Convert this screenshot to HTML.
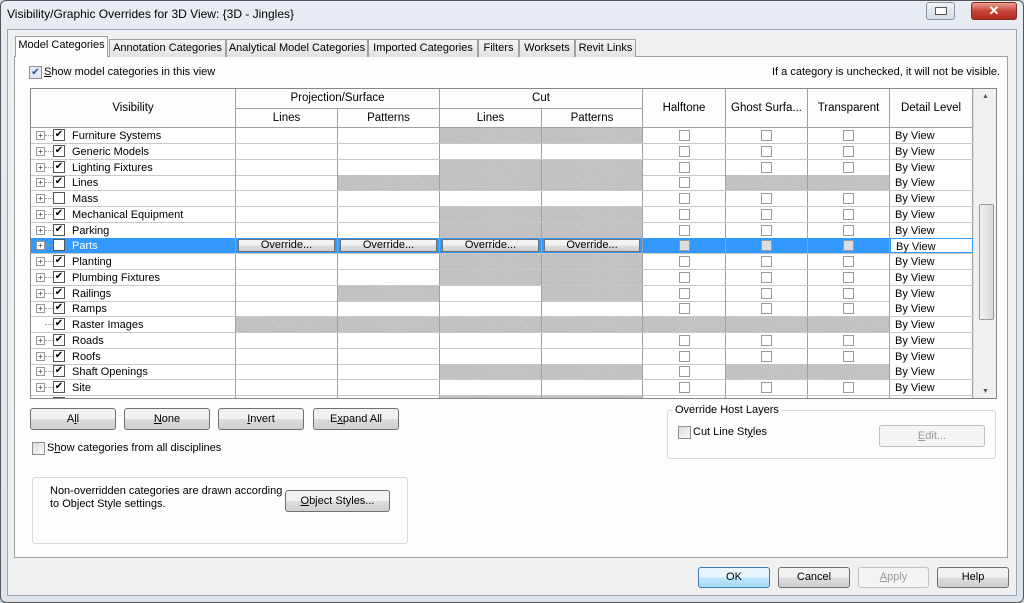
<!DOCTYPE html>
<html><head><meta charset="utf-8"><style>
*{box-sizing:border-box;margin:0;padding:0}
body{width:1024px;height:603px;overflow:hidden;background:#cfd8e2;font-family:"Liberation Sans",sans-serif;font-size:11px;color:#000;position:relative}
.a{position:absolute}
.frame{left:0;top:0;width:1024px;height:603px;border:1px solid #555;border-radius:6px;background:linear-gradient(#e6ecf2,#dce3ea)}
.body{left:7px;top:29px;width:1010px;height:567px;background:#f0f0f0;border:1px solid #9aa6b2}
.panel{left:14px;top:56px;width:994px;height:502px;background:#fdfdfd;border:1px solid #a0a0a0}
.tab{top:39px;height:18px;border:1px solid #a0a0a0;border-bottom:none;background:linear-gradient(#f4f4f4,#e2e2e2);font-size:11px;text-align:center;line-height:17px}
.tab.act{top:36px;height:21px;background:#fdfdfd;z-index:2}
.btn{border:1px solid #707070;border-radius:3px;background:linear-gradient(#f2f2f2 50%,#dddddd 50%,#cfcfcf);text-align:center;font-size:11px}
.cb{width:13px;height:13px;border:1px solid #8f8f8f;background:linear-gradient(135deg,#ddd,#fafafa)}
.grid{left:30px;top:88px;width:967px;height:311px;border:1px solid #828790;background:#fff;overflow:hidden}
.h{position:absolute;border-right:1px solid #a0a0a0;border-bottom:1px solid #a0a0a0;background:#fdfdfd;text-align:center;font-size:11.5px}
.hat{background-color:#cbcbcb;background-image:repeating-linear-gradient(45deg,#bababa 0 1px,transparent 1px 2px)}
.row{position:absolute;left:0;width:942px;height:16px;border-bottom:1px solid #c8c8c8}
.c{position:absolute;top:0;height:15px;border-right:1px solid #a0a0a0}
.sc{width:11px;height:11px;border:1px solid #9a9a9a;position:absolute;top:2px;background:#fff}
u{text-decoration:underline}
</style></head><body>
<div class="a frame"></div>
<div class="a" style="left:7px;top:7px;font-size:12px;color:#000">Visibility/Graphic Overrides for 3D View: {3D - Jingles}</div>
<div class="a" style="left:926px;top:2px;width:29px;height:18px;border:1px solid #8a96a4;border-radius:3px;background:linear-gradient(#f0f4f8,#d5dde6)"><div class="a" style="left:8px;top:4px;width:12px;height:8px;border:1px solid #555;background:#fff"></div></div>
<div class="a" style="left:971px;top:2px;width:46px;height:18px;border:1px solid #7a2a20;border-radius:3px;background:linear-gradient(#e8a090,#c8443a 50%,#b02a20);color:#fff;font-weight:bold;text-align:center;line-height:16px;font-size:13px">✕</div>
<div class="a body"></div>
<div class="a panel"></div>
<div class="a tab act" style="left:15px;width:93px">Model Categories</div>
<div class="a tab" style="left:109px;width:117px">Annotation Categories</div>
<div class="a tab" style="left:226px;width:142px">Analytical Model Categories</div>
<div class="a tab" style="left:368px;width:110px">Imported Categories</div>
<div class="a tab" style="left:478px;width:41px">Filters</div>
<div class="a tab" style="left:519px;width:56px">Worksets</div>
<div class="a tab" style="left:575px;width:61px">Revit Links</div>
<div class="a cb" style="left:29px;top:66px;background:#dfe8f6;font-size:10px;line-height:11px;text-align:center;color:#2a4a8a">✔</div>
<div class="a" style="left:44px;top:66px"><u>S</u>how model categories in this view</div>
<div class="a" style="left:772px;top:66px">If a category is unchecked, it will not be visible.</div>

<div class="a grid">
<div class="h" style="left:0;top:0;width:205px;height:39px;line-height:38px">Visibility</div>
<div class="h" style="left:205px;top:0;width:204px;height:20px;line-height:19px">Projection/Surface</div>
<div class="h" style="left:205px;top:20px;width:102px;height:19px;line-height:18px">Lines</div>
<div class="h" style="left:307px;top:20px;width:102px;height:19px;line-height:18px">Patterns</div>
<div class="h" style="left:409px;top:0;width:203px;height:20px;line-height:19px">Cut</div>
<div class="h" style="left:409px;top:20px;width:102px;height:19px;line-height:18px">Lines</div>
<div class="h" style="left:511px;top:20px;width:101px;height:19px;line-height:18px">Patterns</div>
<div class="h" style="left:612px;top:0;width:83px;height:39px;line-height:38px">Halftone</div>
<div class="h" style="left:695px;top:0;width:82px;height:39px;line-height:38px">Ghost Surfa...</div>
<div class="h" style="left:777px;top:0;width:82px;height:39px;line-height:38px">Transparent</div>
<div class="h" style="left:859px;top:0;width:83px;height:39px;line-height:38px">Detail Level</div>
<div id="rows"></div>
<div class="a" style="left:942px;top:0;width:24px;height:311px;background:#f0f0f0;border-left:1px solid #e0e0e0"></div>
<div class="a" style="left:951px;top:4px;font-size:7px;color:#555">▲</div>
<div class="a" style="left:951px;top:299px;font-size:7px;color:#555">▼</div>
<div class="a" style="left:948px;top:115px;width:15px;height:116px;border:1px solid #9a9a9a;border-radius:2px;background:linear-gradient(90deg,#f2f2f2,#d8d8d8)"></div>
</div>

<div class="a btn" style="left:30px;top:408px;width:86px;height:22px;line-height:20px">A<u>l</u>l</div>
<div class="a btn" style="left:124px;top:408px;width:86px;height:22px;line-height:20px"><u>N</u>one</div>
<div class="a btn" style="left:218px;top:408px;width:86px;height:22px;line-height:20px"><u>I</u>nvert</div>
<div class="a btn" style="left:313px;top:408px;width:86px;height:22px;line-height:20px">E<u>x</u>pand All</div>
<div class="a cb" style="left:32px;top:442px"></div>
<div class="a" style="left:47px;top:442px">S<u>h</u>ow categories from all disciplines</div>
<div class="a" style="left:32px;top:477px;width:376px;height:67px;border:1px solid #d8d8d8;border-radius:3px"></div>
<div class="a" style="left:50px;top:485px;line-height:13px">Non-overridden categories are drawn according<br>to Object Style settings.</div>
<div class="a btn" style="left:285px;top:490px;width:105px;height:22px;line-height:20px"><u>O</u>bject Styles...</div>

<div class="a" style="left:667px;top:410px;width:329px;height:49px;border:1px solid #d8d8d8;border-radius:3px"></div>
<div class="a" style="left:673px;top:404px;background:#fdfdfd;padding:0 2px">Override Host Layers</div>
<div class="a cb" style="left:678px;top:426px"></div>
<div class="a" style="left:693px;top:426px">Cut Line St<u>y</u>les</div>
<div class="a" style="left:879px;top:425px;width:106px;height:22px;border:1px solid #c0c0c0;border-radius:3px;background:#f4f4f4;color:#9a9a9a;text-align:center;line-height:20px"><u>E</u>dit...</div>

<div class="a btn" style="left:698px;top:567px;width:72px;height:21px;line-height:19px;border-color:#3c7fb1;background:linear-gradient(#eaf6fd 50%,#bee6fd 50%,#a7d9f5)">OK</div>
<div class="a btn" style="left:778px;top:567px;width:72px;height:21px;line-height:19px">Cancel</div>
<div class="a" style="left:858px;top:567px;width:71px;height:21px;line-height:19px;border:1px solid #c0c0c0;border-radius:3px;background:#f4f4f4;color:#9a9a9a;text-align:center"><u>A</u>pply</div>
<div class="a btn" style="left:937px;top:567px;width:72px;height:21px;line-height:19px">Help</div>

<script>
var data=[
["Furniture Systems",1,"cl cp"],["Generic Models",1,""],["Lighting Fixtures",1,"cl cp"],["Lines",1,"pp cl cp gh tr"],["Mass",0,""],["Mechanical Equipment",1,"cl cp"],["Parking",1,"cl cp"],["Parts",0,"SEL"],["Planting",1,"cl cp"],["Plumbing Fixtures",1,"cl cp"],["Railings",1,"pp cp"],["Ramps",1,""],["Raster Images",1,"RAS"],["Roads",1,""],["Roofs",1,""],["Shaft Openings",1,"cl cp gh tr"],["Site",1,""],["Specialty Equipment",0,"cl cp"]];
var cols=[["pl",205,102],["pp",307,102],["cl",409,102],["cp",511,101],["hf",612,83],["gh",695,82],["tr",777,82],["dl",859,83]];
var h="";
data.forEach(function(d,i){
 var top=39+i*15.75,sel=d[2]=="SEL",ras=d[2]=="RAS";
 h+='<div class="row" style="top:'+top+'px;'+(sel?'background:#3399ff;':'')+'">';
 h+='<div class="c" style="left:0;width:205px"></div>';
 if(!ras)h+='<div class="a" style="left:5px;top:3px;width:9px;height:9px;border:1px solid #999;background:#fff;font-size:8px;line-height:7px;text-align:center;color:#333">+</div>';
 h+='<div class="a" style="left:14px;top:7px;width:8px;border-top:1px dotted #999"></div>';
 h+='<div class="a" style="left:22px;top:1px;width:12px;height:12px;border:1px solid #555;background:#fff;font-size:10px;line-height:10px;text-align:center">'+(d[1]?'✔':'')+'</div>';
 h+='<div class="a" style="left:41px;top:2px;font-size:11px;'+(sel?'color:#fff;':'')+'">'+d[0]+'</div>';
 cols.forEach(function(c){
  var hat=ras&&c[0]!="dl"||d[2].indexOf(c[0])>=0;
  h+='<div class="c'+(hat?' hat':'')+'" style="left:'+c[1]+'px;width:'+c[2]+'px;'+(c[0]=="dl"?'background:#fff;':'')+(sel&&c[0]=="dl"?'border:1px solid #3399ff;':'')+'">';
  if(sel&&/p|c/.test(c[0][0])&&c[0]!="dl"&&c[0][0]!="h")h+='<div class="btn" style="margin:1px 2px;height:13px;line-height:11px;font-size:11px;border-radius:1px">Override...</div>';
  else if(!hat&&(c[0]=="hf"||c[0]=="gh"||c[0]=="tr"))h+='<div class="sc" style="left:'+(c[2]/2-6)+'px;'+(sel?'background:#ddd;':'')+'"></div>';
  else if(c[0]=="dl")h+='<div style="padding:2px 5px 0;font-size:11px">By View</div>';
  h+='</div>';
 });
 h+='</div>';
});
document.getElementById("rows").innerHTML=h;
</script>
</body></html>
